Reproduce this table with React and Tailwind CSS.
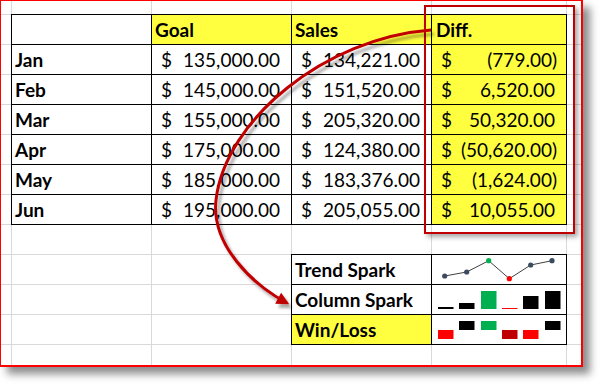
import clsx from "clsx";

const rows = [
  ["Jan", "135,000.00", "134,221.00", "(779.00)"],
  ["Feb", "145,000.00", "151,520.00", "6,520.00"],
  ["Mar", "155,000.00", "205,320.00", "50,320.00"],
  ["Apr", "175,000.00", "124,380.00", "(50,620.00)"],
  ["May", "185,000.00", "183,376.00", "(1,624.00)"],
  ["Jun", "195,000.00", "205,055.00", "10,055.00"],
];

const Blank = () => <div className="bg-white" />;

// plain text cell, bottom aligned like excel
const Label = ({ children, yellow, boxed = true }) => (
  <div
    className={clsx(
      "flex items-end pb-[5px] pl-[3px] leading-none whitespace-nowrap font-bold",
      yellow ? "bg-[#ffff40]" : "bg-white",
      boxed && "outline-1 outline-black"
    )}
  >
    {children}
  </div>
);

const Money = ({ value, yellow }) => {
  const neg = value.startsWith("(");
  return (
    <div
      className={clsx(
        "flex items-end justify-between pb-[5px] pl-[9px] leading-none whitespace-nowrap outline-1 outline-black",
        yellow ? "bg-[#ffff40]" : "bg-white",
        neg ? "pr-[9px]" : "pr-[11px]"
      )}
    >
      <span>$</span>
      <span>{value}</span>
    </div>
  );
};

const trend = [
  [12.7, 21],
  [34.7, 17],
  [56.7, 5.7],
  [77.3, 23.7],
  [98.7, 10],
  [120, 5.7],
];

const TrendSpark = () => (
  <div className="bg-white outline-1 outline-black">
    <svg width="134" height="29" className="block">
      <polyline
        points={trend.map((p) => p.join(",")).join(" ")}
        fill="none"
        stroke="#404040"
        strokeWidth="1"
      />
      {trend.map(([x, y], i) => (
        <circle
          key={i}
          cx={x}
          cy={y}
          r="2.6"
          fill={i === 2 ? "#00b050" : i === 3 ? "#ff0000" : "#3b4a5c"}
        />
      ))}
    </svg>
  </div>
);

const cols = [
  { x: 6, y: 22, h: 2, c: "#000" },
  { x: 27, y: 18, h: 6, c: "#000" },
  { x: 49, y: 6, h: 18, c: "#00b050" },
  { x: 70, y: 23, h: 1, c: "#ff0000" },
  { x: 91, y: 11, h: 13, c: "#000" },
  { x: 113, y: 6, h: 18, c: "#000" },
];

const ColumnSpark = () => (
  <div className="bg-white outline-1 outline-black">
    <svg width="134" height="29" className="block">
      {cols.map((b, i) => (
        <rect key={i} x={b.x} y={b.y} width="15.5" height={b.h} fill={b.c} />
      ))}
    </svg>
  </div>
);

const wl = [
  { x: 6, up: false, c: "#ff0000" },
  { x: 27, up: true, c: "#000" },
  { x: 49, up: true, c: "#00b050" },
  { x: 70, up: false, c: "#c00000" },
  { x: 91, up: false, c: "#ff0000" },
  { x: 113, up: true, c: "#000" },
];

const WinLoss = () => (
  <div className="bg-white outline-1 outline-black">
    <svg width="134" height="29" className="block">
      {wl.map((b, i) => (
        <rect key={i} x={b.x} y={b.up ? 6 : 15} width="15.5" height="9" fill={b.c} />
      ))}
    </svg>
  </div>
);

const emptyRow = (k) => [0, 1, 2, 3, 4, 5].map((i) => <Blank key={k + i} />);

export default function App() {
  return (
    <div className="bg-white w-[601px] h-[385px] font-[Lato,sans-serif] text-[19px] text-black">
      <div className="relative w-[583px] h-[367px]">
        {/* sheet frame */}
        <div className="w-full h-full border-l border-t border-r-2 border-b-2 border-[#ff0000] shadow-[7px_7px_8px_rgba(0,0,0,0.45)]">
          <div className="grid grid-cols-[10px_139px_139px_139px_134px_14px] grid-rows-[13px_repeat(11,29px)_20px] gap-px bg-[#d9d9d9] w-full h-full">
            {emptyRow("r0")}

            <Blank />
            <Label />
            <Label yellow>Goal</Label>
            <Label yellow>Sales</Label>
            <div className="flex items-end pb-[5px] pl-[4px] leading-none font-bold bg-[#ffff40] outline-1 outline-black">
              Diff.
            </div>
            <Blank />

            {rows.map(([m, g, s, d]) => [
              <Blank key={m + "a"} />,
              <Label key={m + "b"}>{m}</Label>,
              <Money key={m + "c"} value={g} />,
              <Money key={m + "d"} value={s} />,
              <Money key={m + "e"} value={d} yellow />,
              <Blank key={m + "f"} />,
            ])}

            {emptyRow("r8")}

            <Blank />
            <Blank />
            <Blank />
            <Label>Trend Spark</Label>
            <TrendSpark />
            <Blank />

            <Blank />
            <Blank />
            <Blank />
            <Label>Column Spark</Label>
            <ColumnSpark />
            <Blank />

            <Blank />
            <Blank />
            <Blank />
            <Label yellow>Win/Loss</Label>
            <WinLoss />
            <Blank />

            {emptyRow("r12")}
          </div>
        </div>

        {/* highlight box round the Diff. column */}
        <div className="absolute left-[424px] top-[5px] w-[151px] h-[229px] border-2 border-[#c00000] shadow-[3px_3px_5px_rgba(0,0,0,0.35)]" />

        {/* curved arrow */}
        <svg
          className="absolute left-0 top-0 pointer-events-none overflow-visible"
          width="583"
          height="367"
        >
          <defs>
            <marker
              id="head"
              viewBox="0 0 10 10"
              refX="8"
              refY="5"
              markerWidth="4.5"
              markerHeight="4.2"
              orient="auto"
              markerUnits="strokeWidth"
            >
              <path d="M0 0 L10 5 L0 10 z" fill="#c00000" />
            </marker>
            <filter id="sh" x="-20%" y="-20%" width="140%" height="140%">
              <feDropShadow dx="3" dy="4" stdDeviation="1.6" floodColor="#000" floodOpacity="0.35" />
            </filter>
          </defs>
          <path
            d="M431 30 C325 38 225 120 216 200 C211 245 252 284 287 303"
            fill="none"
            stroke="#c00000"
            strokeWidth="3"
            markerEnd="url(#head)"
            filter="url(#sh)"
          />
        </svg>
      </div>
    </div>
  );
}
